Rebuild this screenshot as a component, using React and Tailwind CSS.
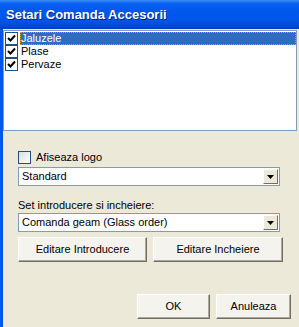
import React, { useState } from "react";

const font = { fontFamily: '"Liberation Sans", Arial, sans-serif' };

const ListCheck = () => (
  <span className="w-[13px] h-[13px] border border-[#1c5180] bg-white flex items-center justify-center shrink-0">
    <svg width="9" height="9" viewBox="0 0 9 9">
      <path d="M1 4 L3.5 6.5 L8 1.5" stroke="#000" strokeWidth="2" fill="none" />
    </svg>
  </span>
);

const Combo = ({ value }) => (
  <div className="h-[19px] w-[262px] bg-white border border-[#7f9db9] flex items-center">
    <span className="flex-1 pl-[3px] text-[11px] text-black leading-none">{value}</span>
    <span className="w-[15px] h-[15px] mr-[1px] bg-[#ece9d8] border border-t-white border-l-white border-r-[#716f64] border-b-[#716f64] flex items-center justify-center">
      <svg width="7" height="4" viewBox="0 0 7 4">
        <path d="M0 0 H7 L3.5 4 Z" fill="#000" />
      </svg>
    </span>
  </div>
);

const Btn = ({ children, w }) => (
  <button
    className={`${w} h-[25px] bg-[#f4f3ee] border border-t-[#fff] border-l-[#fff] border-r-[#716f64] border-b-[#716f64] shadow-[inset_-1px_-1px_0_#aca899] text-[11px] text-black`}
  >
    {children}
  </button>
);

export default function App() {
  const [items] = useState(["Jaluzele", "Plase", "Pervaze"]);

  return (
    <div className="w-[299px] h-[327px] overflow-hidden flex flex-col bg-[#ece9d8]" style={font}>
      {/* title bar */}
      <div className="h-[29px] shrink-0 flex items-center pl-[6px] bg-[linear-gradient(to_bottom,#3d8ef5_0%,#0a62f2_12%,#0058ee_35%,#0055e8_70%,#004ad8_90%,#003db8_100%)]">
        <span className="text-white font-bold text-[13px] [text-shadow:1px_1px_0_#0a1e80]">
          Setari Comanda Accesorii
        </span>
      </div>

      <div className="flex-1 flex border-l-[3px] border-[#0055ea]">
        <div className="flex-1 flex flex-col">
          {/* list */}
          <div className="mt-[1px] h-[101px] w-[294px] bg-white border border-[#7f9db9] pt-[1px]">
            {items.map((it, i) => (
              <div key={it} className="h-[13px] flex items-center pl-[1px]">
                <ListCheck />
                <span
                  className={
                    i === 0
                      ? "ml-[2px] flex-1 h-[13px] bg-[#316ac5] text-white text-[11px] leading-[13px] pl-[1px] outline outline-1 outline-dotted outline-offset-[-1px] outline-[#ce9a35]"
                      : "ml-[2px] text-[11px] leading-[13px] text-black pl-[1px]"
                  }
                >
                  {it}
                </span>
              </div>
            ))}
          </div>

          {/* settings */}
          <div className="pl-[15px] flex flex-col">
            <label className="mt-[20px] h-[13px] flex items-center gap-[5px] text-[11px] leading-none text-black">
              <span className="w-[13px] h-[13px] border border-[#1c5180] bg-[linear-gradient(135deg,#dcdcd7,#fff)]" />
              Afiseaza logo
            </label>
            <div className="mt-[3px]">
              <Combo value="Standard" />
            </div>
            <div className="mt-[14px] h-[11px] text-[11px] text-black leading-none">Set introducere si incheiere:</div>
            <div className="mt-[2px]">
              <Combo value="Comanda geam (Glass order)" />
            </div>
            <div className="mt-[5px] flex gap-[6px]">
              <Btn w="w-[129px]">Editare Introducere</Btn>
              <Btn w="w-[130px]">Editare Incheiere</Btn>
            </div>
            <div className="mt-[32px] flex gap-[6px] pl-[119px]">
              <Btn w="w-[73px]">OK</Btn>
              <Btn w="w-[75px]">Anuleaza</Btn>
            </div>
          </div>
        </div>
      </div>
    </div>
  );
}
